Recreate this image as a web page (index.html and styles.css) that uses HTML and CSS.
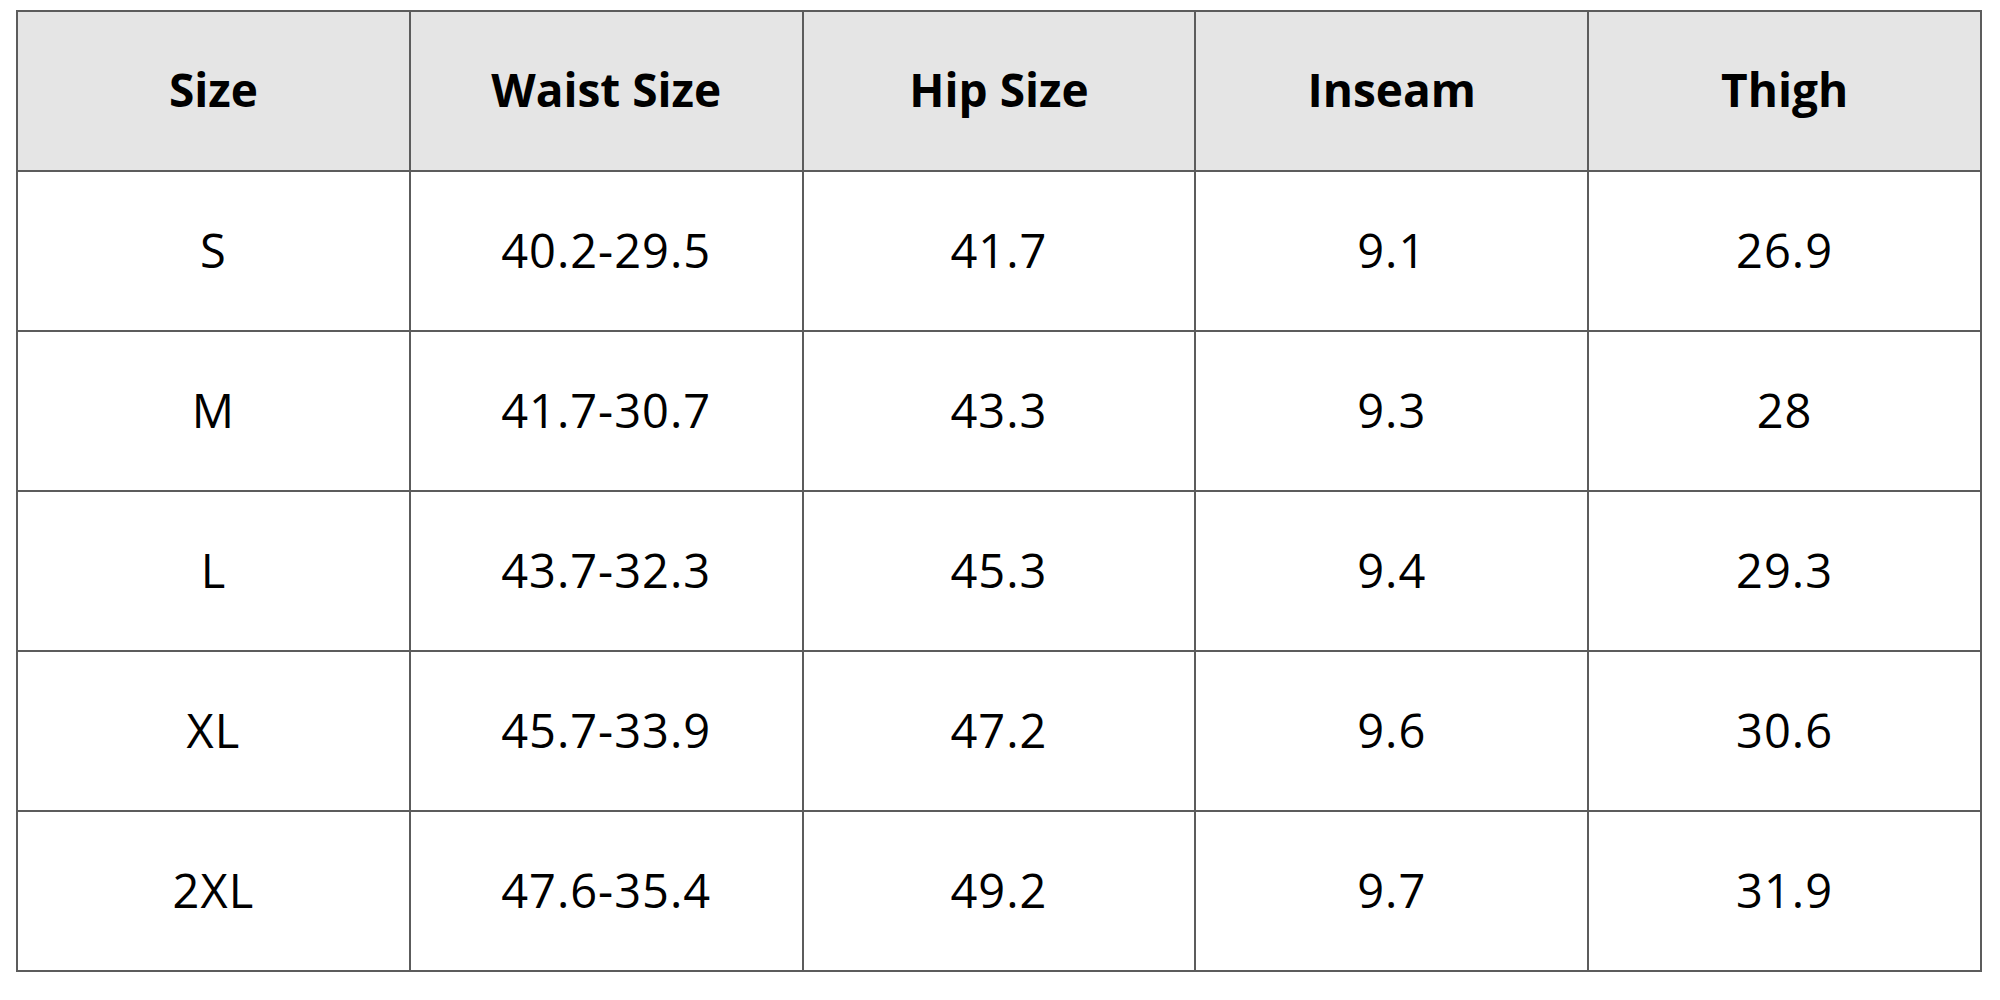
FILE: index.html
```html
<!DOCTYPE html>
<html>
<head>
<meta charset="utf-8">
<link rel="stylesheet" href="styles.css">
</head>
<body>
<table class="size-table">
  <thead>
    <tr><th>Size</th><th>Waist Size</th><th>Hip Size</th><th>Inseam</th><th>Thigh</th></tr>
  </thead>
  <tbody>
    <tr><td>S</td><td>40.2-29.5</td><td>41.7</td><td>9.1</td><td>26.9</td></tr>
    <tr><td>M</td><td>41.7-30.7</td><td>43.3</td><td>9.3</td><td>28</td></tr>
    <tr><td>L</td><td>43.7-32.3</td><td>45.3</td><td>9.4</td><td>29.3</td></tr>
    <tr><td>XL</td><td>45.7-33.9</td><td>47.2</td><td>9.6</td><td>30.6</td></tr>
    <tr><td>2XL</td><td>47.6-35.4</td><td>49.2</td><td>9.7</td><td>31.9</td></tr>
  </tbody>
</table>
</body>
</html>
```
FILE: styles.css
```css
html, body {
  margin: 0;
  padding: 0;
  background: #ffffff;
}
body {
  padding: 10px 0 0 16px;
}
.size-table {
  width: 1966px;
  border-collapse: collapse;
  table-layout: fixed;
  font-family: "Open Sans", "Liberation Sans", sans-serif;
  color: #000;
}
.size-table th,
.size-table td {
  height: 158px;
  padding: 0;
  text-align: center;
  vertical-align: middle;
  border: 2px solid #5c5c5c;
}
.size-table th {
  background: #e5e5e5;
  font-weight: 700;
  font-size: 46px;
  padding-bottom: 4px;
  height: 154px;
}
.size-table td {
  font-weight: 400;
  font-size: 47px;
  letter-spacing: 1px;
  padding-bottom: 2px;
  height: 156px;
}
```
